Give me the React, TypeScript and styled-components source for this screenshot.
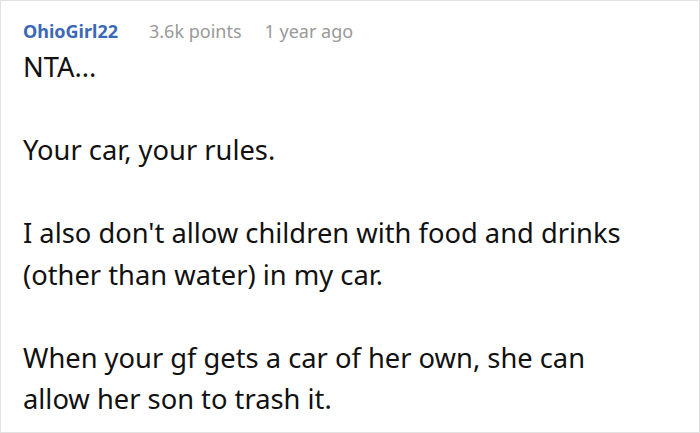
import React from "react";
import styled, { createGlobalStyle } from "styled-components";

const Global = createGlobalStyle`
  html, body { margin: 0; padding: 0; background: #fff; }
  * { box-sizing: border-box; }
`;

const Card = styled.div`
  width: 700px;
  height: 433px;
  border: 1px solid #e2e2e2;
  background: #fff;
  padding: 18px 60px 0 22px;
  font-family: "Noto Sans", sans-serif;
  overflow: hidden;
`;

const Meta = styled.div`
  display: flex;
  align-items: baseline;
  gap: 23px;
  font-size: 18px;
  line-height: 24px;
`;

const User = styled.span`
  color: #3b69b6;
  font-weight: 700;
  margin-right: 8px;
`;

const Info = styled.span`
  color: #999;
`;

const Body = styled.div`
  font-size: 27.3px;
  line-height: 41.5px;
  color: #111;
  margin-top: 3px;
`;

const Para = styled.p`
  margin: 0 0 41.5px 0;
`;

export default function App() {
  return (
    <>
      <Global />
      <Card>
        <Meta>
          <User>OhioGirl22</User>
          <Info>3.6k points</Info>
          <Info>1 year ago</Info>
        </Meta>
        <Body>
          <Para>NTA...</Para>
          <Para>Your car, your rules.</Para>
          <Para>I also don't allow children with food and drinks (other than water) in my car.</Para>
          <Para>When your gf gets a car of her own, she can allow her son to trash it.</Para>
        </Body>
      </Card>
    </>
  );
}
